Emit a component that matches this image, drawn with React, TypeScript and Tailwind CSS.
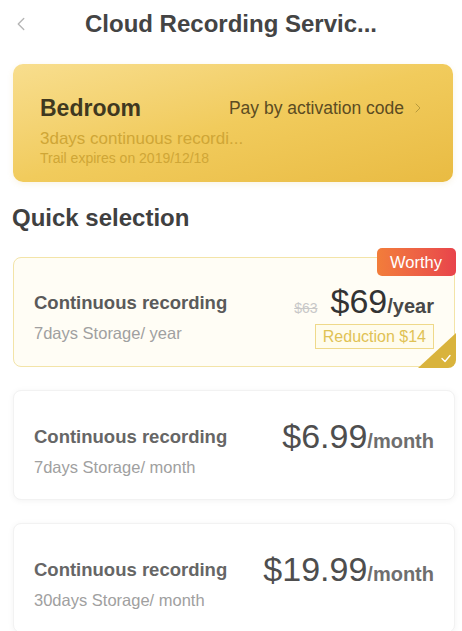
import { ChevronLeft, ChevronRight } from "lucide-react";

type Plan = {
    title: string;
    storage: string;
    price: string;
    unit: string;
};

const plans: Plan[] = [
    { title: "Continuous recording", storage: "7days Storage/ month", price: "$6.99", unit: "/month" },
    { title: "Continuous recording", storage: "30days Storage/ month", price: "$19.99", unit: "/month" },
];

function PlanCard({ plan }: { plan: Plan }) {
    return (
        <div className="h-[110px] rounded-[8px] bg-white border border-[#f2f2f2] shadow-[0_1px_6px_rgba(0,0,0,0.05)] flex justify-between pl-5 pr-5">
            <div className="pt-[35px]">
                <div className="text-[18.5px] leading-[22px] font-bold text-[#666]">{plan.title}</div>
                <div className="mt-[9px] text-[16.5px] leading-[20px] text-[#a0a0a0]">{plan.storage}</div>
            </div>
            <div className="pt-[28px] flex items-baseline">
                <span className="text-[34px] leading-[34px] text-[#4e4e4e]">{plan.price}</span>
                <span className="text-[20px] font-bold text-[#6e6e6e]">{plan.unit}</span>
            </div>
        </div>
    );
}

export default function App() {
    return (
        <div className="w-[462px] h-[631px] overflow-hidden bg-white font-['Liberation_Sans',Arial,sans-serif]">
            {/* header */}
            <div className="relative h-[48px] flex items-center justify-center">
                <ChevronLeft className="absolute left-[10px] top-[13px] w-[22px] h-[22px] text-[#b5b5b5]" strokeWidth={1.5} />
                <h1 className="text-[24px] leading-[28px] font-bold text-[#444]">Cloud Recording Servic...</h1>
            </div>

            <div className="pl-[13px] pr-[9px] pt-[16px]">
                {/* device card */}
                <div className="h-[118px] rounded-[10px] bg-gradient-to-br from-[#f8de8e] via-[#f1cb5c] to-[#e9bb42] shadow-[0_2px_6px_rgba(200,160,40,0.12)] px-[27px] pt-[30px]">
                    <div className="flex items-center justify-between">
                        <span className="text-[23px] leading-[28px] font-bold text-[#40381f]">Bedroom</span>
                        <span className="flex items-center text-[17.5px] text-[#5c4c22]">
                            Pay by activation code
                            <ChevronRight className="w-[16px] h-[16px] ml-[6px] text-[#b89a3c]" strokeWidth={1.5} />
                        </span>
                    </div>
                    <div className="mt-[7px] text-[17px] leading-[20px] text-[#cfa636]">3days continuous recordi...</div>
                    <div className="text-[14px] leading-[18px] text-[#cfa636]">Trail expires on 2019/12/18</div>
                </div>
            </div>

            <div className="px-[12px] pt-[22px] text-[24px] leading-[28px] font-bold text-[#404040]">Quick selection</div>

            <div className="pl-[13px] pr-[7px] pt-[25px] flex flex-col gap-[23px]">
                {/* selected plan */}
                <div className="relative h-[110px] rounded-[8px] bg-[#fffdf5] border-[1.5px] border-[#f3e4a8] flex justify-between pl-5 pr-5">
                    <div className="pt-[34px]">
                        <div className="text-[18.5px] leading-[22px] font-bold text-[#5a5a5a]">Continuous recording</div>
                        <div className="mt-[9px] text-[16.5px] leading-[20px] text-[#a0a0a0]">7days Storage/ year</div>
                    </div>
                    <div className="pt-[26px] flex flex-col items-end">
                        <div className="flex items-baseline">
                            <span className="text-[14px] text-[#c8c8c8] line-through mr-[13px]">$63</span>
                            <span className="text-[34px] leading-[34px] text-[#333]">$69</span>
                            <span className="text-[20px] font-bold text-[#484848]">/year</span>
                        </div>
                        <div className="mt-[3px] h-[25px] px-[7px] border border-[#efd98a] bg-[#fffcec] flex items-center text-[16px] text-[#dfc255]">
                            Reduction $14
                        </div>
                    </div>
                    <div className="absolute -top-[10px] -right-[1.5px] w-[79px] h-[28px] rounded-[5px] bg-gradient-to-r from-[#f27d3a] to-[#e8434b] flex items-center justify-center text-[16.5px] text-white">
                        Worthy
                    </div>
                    <div className="absolute -bottom-[1.5px] -right-[1.5px] w-[38px] h-[35px] rounded-br-[8px] overflow-hidden">
                        <svg width="38" height="35" viewBox="0 0 38 35">
                            <polygon points="38,0 38,35 0,35" fill="#d9b33c" />
                            <path d="M24 25.5 L27 28.5 L32 22.5" stroke="#fff" strokeWidth="1.4" fill="none" strokeLinecap="round" strokeLinejoin="round" />
                        </svg>
                    </div>
                </div>

                {plans.map((p) => (
                    <PlanCard key={p.storage} plan={p} />
                ))}
            </div>
        </div>
    );
}
